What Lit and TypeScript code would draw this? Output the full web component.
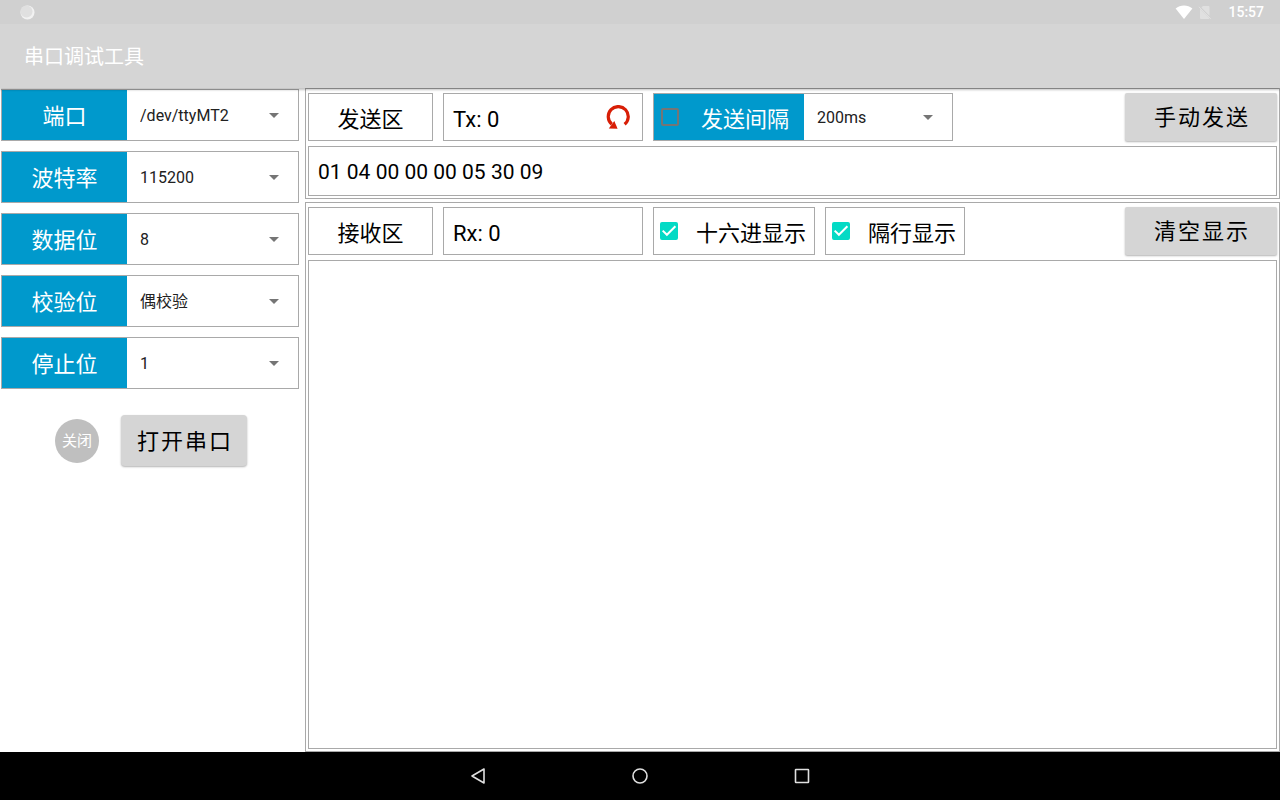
import { LitElement, html, css, svg } from "lit";
import { customElement, property, state } from "lit/decorators.js";

const baseText = css`
  *,
  *::before,
  *::after {
    box-sizing: border-box;
  }
  button,
  input,
  select,
  textarea {
    margin: 0;
    font: inherit;
    color: inherit;
  }
`;

@customElement("drop-down")
class DropDown extends LitElement {
  @property() label = "";
  @property({ attribute: false }) options: string[] = [];

  static styles = [
    baseText,
    css`
      :host {
        display: block;
        flex: 1;
        min-width: 0;
      }
      .wrap {
        display: grid;
        height: 100%;
        align-items: center;
      }
      .select {
        grid-area: 1 / 1;
        width: 100%;
        height: 100%;
        padding: 2px 40px 0 13px;
        border: 0;
        appearance: none;
        background: transparent;
        font-size: 16px;
        color: #212121;
      }
      .arrow {
        grid-area: 1 / 1;
        justify-self: end;
        margin-right: 19px;
        pointer-events: none;
        fill: #757575;
      }
    `,
  ];

  render() {
    return html`<div class="wrap">
      <select class="select" aria-label=${this.label}>
        ${this.options.map((o) => html`<option>${o}</option>`)}
      </select>
      <svg class="arrow" width="10" height="5" viewBox="0 0 10 5"><path d="M0 0h10L5 5z" /></svg>
    </div>`;
  }
}

@customElement("app-root")
class AppRoot extends LitElement {
  @state() private hex = true;
  @state() private newline = true;
  @state() private timed = false;

  private fields = [
    { label: "端口", options: ["/dev/ttyMT2", "/dev/ttyMT1"] },
    { label: "波特率", options: ["115200", "57600", "9600"] },
    { label: "数据位", options: ["8", "7", "6", "5"] },
    { label: "校验位", options: ["偶校验", "奇校验", "无校验"] },
    { label: "停止位", options: ["1", "2"] },
  ];

  static styles = [
    baseText,
    css`
      :host {
        display: flex;
        flex-direction: column;
        min-height: 100vh;
        background: #fff;
        color: #000;
        font-family: Roboto, "Noto Sans CJK SC", sans-serif;
        font-size: 22px;
        line-height: 26px;
      }
      .status {
        display: flex;
        align-items: center;
        height: 24px;
        padding: 0 16px 0 20px;
        background: #d0d0d0;
        color: #fff;
        font-size: 14px;
        font-weight: 500;
      }
      .status-icons {
        display: flex;
        align-items: center;
        gap: 5px;
        margin: 0 16px 0 auto;
      }
      .bar {
        position: relative;
        z-index: 1;
        display: flex;
        align-items: center;
        height: 64px;
        padding: 2px 24px 0;
        background: #d5d5d5;
        box-shadow: 0 2px 2px rgba(0, 0, 0, 0.24);
      }
      .title {
        margin: 0;
        color: #fff;
        font-size: 20px;
        font-weight: 400;
      }
      .main {
        flex: 1;
        display: flex;
        gap: 6px;
      }
      .side {
        display: flex;
        flex-direction: column;
        gap: 10px;
        width: 299px;
        padding: 1px 0 0 1px;
      }
      .box {
        display: flex;
        align-items: center;
        border: 1px solid #a9a9a9;
        background: #fff;
      }
      .field {
        height: 52px;
        align-items: stretch;
      }
      .name {
        display: flex;
        align-items: center;
        justify-content: center;
        width: 125px;
        padding-top: 3px;
        background: #0099cc;
        color: #fff;
      }
      .connect {
        display: flex;
        align-items: center;
        gap: 22px;
        padding: 16px 0 0 54px;
      }
      .lamp {
        display: grid;
        place-items: center;
        width: 44px;
        height: 44px;
        border-radius: 50%;
        background: #bfbfbf;
        color: #fff;
        font-size: 15px;
      }
      .action {
        height: 48px;
        padding: 2px 14px 0 16px;
        border: 0;
        border-radius: 2px;
        background: #d5d5d5;
        box-shadow: 0 1px 2px rgba(0, 0, 0, 0.3);
        letter-spacing: 2px;
      }
      .open {
        height: 51px;
        border-radius: 4px;
      }
      .end {
        width: 152px;
        margin-left: auto;
      }
      .work {
        flex: 1;
        display: flex;
        flex-direction: column;
        gap: 3px;
        min-width: 0;
      }
      .panel {
        display: flex;
        flex-direction: column;
        gap: 5px;
        padding: 4px 2px 2px;
        border: 1px solid #a9a9a9;
      }
      .grow {
        flex: 1;
      }
      .row {
        display: flex;
        gap: 10px;
        height: 48px;
      }
      .text {
        padding-top: 5px;
      }
      .caption {
        justify-content: center;
        width: 125px;
      }
      .count {
        justify-content: space-between;
        width: 200px;
        padding: 0 12px 0 9px;
      }
      .reset {
        display: flex;
        padding: 0;
        border: 0;
        background: none;
      }
      .interval {
        align-items: stretch;
        width: 300px;
      }
      .check {
        display: flex;
        align-items: center;
        gap: 18px;
        padding: 0 8px 0 6px;
      }
      .timer {
        gap: 22px;
        width: 150px;
        padding: 0 0 0 7px;
        background: #0099cc;
        color: #fff;
      }
      .tick {
        display: grid;
      }
      .tick-input {
        grid-area: 1 / 1;
        width: 18px;
        height: 18px;
        border: 2px solid #757575;
        border-radius: 2px;
        appearance: none;
      }
      .tick-input:checked {
        border-color: #03dac5;
        background: #03dac5;
      }
      .tick-mark {
        grid-area: 1 / 1;
        pointer-events: none;
        fill: none;
        stroke: #fff;
        stroke-width: 2;
      }
      .payload {
        width: 100%;
        height: 50px;
        padding: 2px 9px 0;
        border-radius: 0;
        outline: 0;
        font-size: 21px;
      }
      .output {
        flex: 1;
        width: 100%;
        padding: 9px;
        border-radius: 0;
        outline: 0;
        resize: none;
      }
      .nav {
        display: flex;
        align-items: center;
        justify-content: center;
        gap: 138px;
        height: 48px;
        background: #000;
      }
      .nav-button {
        display: flex;
        padding: 0;
        border: 0;
        background: none;
      }
      .nav-icon {
        fill: none;
        stroke: #e0e0e0;
        stroke-width: 1.6;
        stroke-linejoin: round;
      }
    `,
  ];

  private tick(checked: boolean, set: (v: boolean) => void) {
    return html`<span class="tick">
      <input
        class="tick-input"
        type="checkbox"
        .checked=${checked}
        @change=${(e: Event) => set((e.target as HTMLInputElement).checked)}
      />
      ${checked
        ? html`<svg class="tick-mark" width="18" height="18" viewBox="0 0 18 18"><path d="M2.700 8.600l4.200 4.200L15.400 4.300" /></svg>`
        : ""}
    </span>`;
  }

  private navButton(name: string, shape: unknown) {
    return html`<button class="nav-button" aria-label=${name}>
      <svg class="nav-icon" width="24" height="24" viewBox="0 0 24 24">${shape}</svg>
    </button>`;
  }

  render() {
    return html`
      <div class="status">
        <svg width="15" height="15" viewBox="0 0 15 15">
          <circle cx="7.5" cy="7.5" r="7" fill="#f2f2f2" />
          <circle cx="6.5" cy="6.5" r="6" fill="#e0e0e0" />
        </svg>
        <span class="status-icons">
          <svg width="18" height="14" viewBox="0 0 18 14">
            <path d="M9 14L.6 3.400C3 1.400 6 .4 9 .4s6 1 8.400 3z" fill="#fff" />
          </svg>
          <svg width="14" height="15" viewBox="0 0 14 15">
            <path d="M5 1h5.500q1 0 1 1v8.800L3.400 2.600zM2 3.800L11.500 13.300q-.3.700-1 .7H3q-1 0-1-1z" fill="#e0e0e0" />
            <path d="M.8 1.800l12 12" stroke="#e0e0e0" />
          </svg>
        </span>
        <span>15:57</span>
      </div>
      <header class="bar"><h1 class="title">串口调试工具</h1></header>
      <main class="main">
        <section class="side">
          ${this.fields.map(
            (f) => html`<div class="box field">
              <span class="name">${f.label}</span>
              <drop-down .label=${f.label} .options=${f.options}></drop-down>
            </div>`
          )}
          <div class="connect">
            <span class="lamp">关闭</span>
            <button class="action open">打开串口</button>
          </div>
        </section>
        <div class="work">
          <section class="panel">
            <div class="row">
              <label class="box caption" for="payload"><span class="text">发送区</span></label>
              <div class="box count">
                <span class="text">Tx: 0</span>
                <button class="reset" aria-label="清零">
                  <svg width="24" height="24" viewBox="0 0 24 24">
                    <path d="M18.600 19.300A10 10 0 1 0 5.800 19.200" fill="none" stroke="#d81e06" stroke-width="3.200" />
                    <path d="M8.300 16L11.600 23.800L2.800 23.400z" fill="#d81e06" />
                  </svg>
                </button>
              </div>
              <div class="box interval">
                <label class="check timer">
                  ${this.tick(this.timed, (v) => (this.timed = v))}
                  <span class="text">发送间隔</span>
                </label>
                <drop-down label="发送间隔" .options=${["200ms", "500ms", "1000ms"]}></drop-down>
              </div>
              <button class="action end">手动发送</button>
            </div>
            <input id="payload" class="box payload" type="text" value="01 04 00 00 00 05 30 09" />
          </section>
          <section class="panel grow">
            <div class="row">
              <label class="box caption" for="output"><span class="text">接收区</span></label>
              <div class="box count"><span class="text">Rx: 0</span></div>
              <label class="box check">
                ${this.tick(this.hex, (v) => (this.hex = v))}
                <span class="text">十六进显示</span>
              </label>
              <label class="box check">
                ${this.tick(this.newline, (v) => (this.newline = v))}
                <span class="text">隔行显示</span>
              </label>
              <button class="action end">清空显示</button>
            </div>
            <textarea id="output" class="box output" readonly></textarea>
          </section>
        </div>
      </main>
      <nav class="nav">
        ${this.navButton("返回", svg`<path d="M18 5v14L6 12z" />`)}
        ${this.navButton("主页", svg`<circle cx="12" cy="12" r="7" />`)}
        ${this.navButton("最近", svg`<rect x="5.500" y="5.500" width="13" height="13" rx=".5" />`)}
      </nav>
    `;
  }
}
